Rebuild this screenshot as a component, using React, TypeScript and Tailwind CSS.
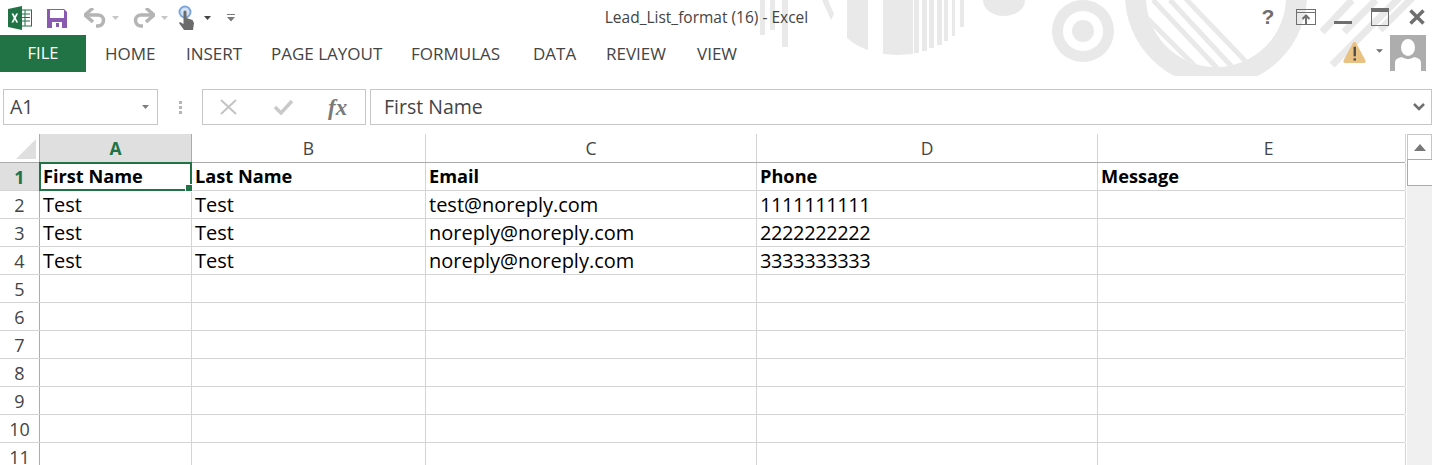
import React from "react";

const font = "font-['Open_Sans','Noto_Sans',sans-serif]";

const columns = [
    { name: "A", width: "w-[152px]", active: true },
    { name: "B", width: "w-[234px]" },
    { name: "C", width: "w-[331px]" },
    { name: "D", width: "w-[341px]" },
    { name: "E", width: "w-[308px]", extra: "pl-[34px]" },
];

const rows = [
    ["First Name", "Last Name", "Email", "Phone", "Message"],
    ["Test", "Test", "test@noreply.com", "1111111111", ""],
    ["Test", "Test", "noreply@noreply.com", "2222222222", ""],
    ["Test", "Test", "noreply@noreply.com", "3333333333", ""],
    ["", "", "", "", ""],
    ["", "", "", "", ""],
    ["", "", "", "", ""],
    ["", "", "", "", ""],
    ["", "", "", "", ""],
    ["", "", "", "", ""],
    ["", "", "", "", ""],
];

const tabs = [
    { label: "HOME", width: "w-[81px]" },
    { label: "INSERT", width: "w-[85px]" },
    { label: "PAGE LAYOUT", width: "w-[140px]" },
    { label: "FORMULAS", width: "w-[122px]" },
    { label: "DATA", width: "w-[73px]" },
    { label: "REVIEW", width: "w-[91px]" },
    { label: "VIEW", width: "w-[60px]" },
];

const Backdrop = () => (
    <svg className="absolute left-0 top-0" width="1432" height="76" viewBox="0 0 1432 76">
        <defs>
            <clipPath id="inner">
                <circle cx="1216" cy="-3" r="70" />
            </clipPath>
        </defs>
        <g fill="#e9e9e9">
            <rect x="760" y="0" width="5" height="35" />
            <rect x="770" y="0" width="5" height="30" />
            <rect x="782" y="0" width="6" height="47" />
            <path d="M822 0h6l6 14-3 6z" />
            <path d="M847 0h21v50q-12-4-21-12z" />
            <path d="M883 0h30v54l-15 1-15-1z" />
            <rect x="914" y="0" width="5" height="53" />
            <rect x="922" y="0" width="5" height="51" />
            <rect x="929" y="0" width="5" height="48" />
            <rect x="937" y="0" width="5" height="45" />
            <rect x="944" y="0" width="4" height="41" />
            <rect x="952" y="0" width="3" height="36" />
            <rect x="960" y="0" width="4" height="27" />
            <path d="M983 0h42c0 9-9 16-21 16s-21-7-21-16z" />
            <path fillRule="evenodd" d="M1083 0a31 31 0 1 1-.01 0zM1083 11a20 20 0 1 0 .01 0z" />
            <circle cx="1083" cy="31" r="11" />
            <path fillRule="evenodd" d="M1125 -5a91 91 0 0 0 182 0a91 91 0 0 0-182 0zM1146 -3a70 70 0 0 0 140 0a70 70 0 0 0-140 0z" />
        </g>
        <g stroke="#e9e9e9" strokeWidth="5" clipPath="url(#inner)">
            <line x1="1128" y1="-1" x2="1197" y2="68" />
            <line x1="1153" y1="0" x2="1217" y2="68" />
            <line x1="1170" y1="0" x2="1233" y2="68" />
            <line x1="1185" y1="-2" x2="1250" y2="66" />
        </g>
        <g stroke="#e9e9e9" strokeWidth="7">
            <line x1="1322" y1="32" x2="1352" y2="0" />
            <line x1="1344" y1="32" x2="1376" y2="0" />
            <line x1="1332" y1="65" x2="1399" y2="-2" />
            <line x1="1380" y1="30" x2="1414" y2="-4" />
        </g>
    </svg>
);

const ExcelLogo = () => (
    <svg width="24" height="24" viewBox="0 0 24 24">
        <rect x="11" y="4" width="12.5" height="16" fill="#fff" stroke="#217346" />
        <path d="M13 8h9M13 11.5h9M13 15h9M17 4v16" stroke="#217346" strokeWidth="1" />
        <path d="M0 3L14 0v24L0 21z" fill="#217346" />
        <path d="M3.5 7.5h2l1.3 2.8 1.4-2.8h1.9l-2.3 4.4 2.4 4.6h-2l-1.4-3-1.5 3H3.4l2.4-4.6z" fill="#fff" />
    </svg>
);

const SaveIcon = () => (
    <svg width="20" height="20" viewBox="0 0 20 20">
        <path d="M0 1h17l3 3v16H0z" fill="#8a5ab0" />
        <rect x="3" y="2" width="14" height="8" fill="#fff" />
        <rect x="5" y="14" width="10" height="6" fill="#fff" />
        <rect x="9" y="15" width="3" height="4" fill="#8a5ab0" />
    </svg>
);

const Caret = ({ color = "#c6c6c6" }: { color?: string }) => (
    <svg width="7" height="4" viewBox="0 0 7 4">
        <path d="M0 0h7L3.5 4z" fill={color} />
    </svg>
);

const UndoIcon = ({ flip }: { flip?: boolean }) => (
    <svg width="22" height="20" viewBox="0 0 22 20" className={flip ? "-scale-x-100" : ""}>
        <path d="M2 7h12a5.500 5.500 0 0 1 0 11h-2" fill="none" stroke="#b4b4b4" strokeWidth="3.500" />
        <path d="M9 0L1 7l8 7" fill="none" stroke="#b4b4b4" strokeWidth="3.500" />
    </svg>
);

const TouchIcon = () => (
    <svg width="18" height="26" viewBox="0 0 18 26">
        <circle cx="7" cy="7" r="5.500" fill="#d3e2f3" stroke="#7ea6d8" strokeWidth="2" />
        <path d="M5.500 7a1.500 1.500 0 0 1 3 0v6l6 2 1.500 3-1 7H6l-5-7 1-1 3.500 2z" fill="#6b6b6b" />
    </svg>
);

const CustomizeIcon = () => (
    <svg width="8" height="8" viewBox="0 0 8 8">
        <rect x="0" y="0" width="8" height="1" fill="#7a7a7a" />
        <path d="M0 3h8L4 7.500z" fill="#7a7a7a" />
    </svg>
);

const WindowButtons = () => (
    <div className="flex items-start h-[35px] pr-[7px] text-[#6f6f6f]">
        <span className="w-[24px] mr-[16px] mt-[2px] text-center text-[21px] leading-[29px] font-bold font-['Liberation_Sans',sans-serif]">?</span>
        <svg width="20" height="16" viewBox="0 0 20 16" className="mt-[9px] mr-[18px]">
            <rect x=".5" y=".5" width="19" height="15" fill="none" stroke="#6f6f6f" />
            <path d="M1 3.500h18" stroke="#6f6f6f" />
            <path d="M10 15V7M6.500 10L10 6.500l3.500 3.500" fill="none" stroke="#6f6f6f" strokeWidth="2" />
        </svg>
        <span className="w-[18px] h-[3px] mt-[21px] mr-[19px] bg-[#6f6f6f]" />
        <svg width="18" height="18" viewBox="0 0 18 18" className="mt-[8px] mr-[20px]">
            <rect x=".5" y=".5" width="17" height="17" fill="none" stroke="#6f6f6f" />
            <rect x="0" y="0" width="18" height="4" fill="#6f6f6f" />
        </svg>
        <svg width="16" height="16" viewBox="0 0 16 16" className="mt-[9px]">
            <path d="M1.500 1.500l13 13M14.500 1.500l-13 13" stroke="#6f6f6f" strokeWidth="3.500" />
        </svg>
    </div>
);

const Account = () => (
    <div className="flex items-start pr-[6px]">
        <svg width="23" height="21" viewBox="0 0 24 22" className="mt-[7px] mr-[10px]">
            <path d="M12 0c1 0 1.500 .5 2 1.500l9.500 18c.5 1.200 0 2.500-1.500 2.500H2c-1.500 0-2-1.300-1.500-2.500L10 1.500C10.500 .5 11 0 12 0z" fill="#e9c283" />
            <rect x="11" y="5" width="2.500" height="10" fill="#4d4d4d" />
            <rect x="11" y="17" width="2.500" height="2.500" fill="#4d4d4d" />
        </svg>
        <svg width="7" height="4" viewBox="0 0 8 4" className="mt-[14px] mr-[7px]">
            <path d="M0 0h8L4 4z" fill="#6f6f6f" />
        </svg>
        <svg width="36" height="36" viewBox="0 0 36 36">
            <rect width="36" height="36" fill="#adadad" />
            <ellipse cx="18" cy="12.500" rx="7" ry="8.500" fill="#fff" />
            <path d="M5 36V28c0-4 3-5 7-6 2 1.500 4 2 6 2s4-.5 6-2c4 1 7 2 7 6v8z" fill="#fff" />
        </svg>
    </div>
);

const FormulaBar = () => (
    <div className="flex h-[36px] mt-[17px] pl-[3px] items-stretch">
        <div className="w-[155px] border border-[#c6c6c6] flex items-center justify-between pl-[6px] pr-[8px] text-[#444]">
            <span className="text-[19.5px]">A1</span>
            <Caret color="#7f7f7f" />
        </div>
        <div className="w-[44px] flex flex-col items-center justify-center gap-[2px]">
            <span className="w-[3px] h-[3px] bg-[#b5b5b5]" />
            <span className="w-[3px] h-[3px] bg-[#b5b5b5]" />
            <span className="w-[3px] h-[3px] bg-[#b5b5b5]" />
        </div>
        <div className="w-[164px] border border-[#c6c6c6] flex items-center pl-[17px]">
            <svg width="17" height="16" viewBox="0 0 17 16">
                <path d="M1 1l15 14M16 1L1 15" stroke="#c4c4c4" strokeWidth="2" />
            </svg>
            <svg width="20" height="16" viewBox="0 0 20 16" className="ml-[37px]">
                <path d="M1 8l6 6L18 2" fill="none" stroke="#c9c9c9" strokeWidth="3.500" />
            </svg>
            <span className="ml-[34px] font-['Liberation_Serif',serif] italic font-bold text-[23px] leading-none text-[#7a7a7a]">fx</span>
        </div>
        <div className="w-[4px]" />
        <div className="flex-1 border border-[#c6c6c6] flex items-center justify-between pl-[13px] pr-[6px] text-[#444]">
            <span className="text-[19.5px]">First Name</span>
            <svg width="12" height="8" viewBox="0 0 12 8">
                <path d="M1 1l5 5 5-5" fill="none" stroke="#6f6f6f" strokeWidth="2.500" />
            </svg>
        </div>
    </div>
);

const Sheet = () => (
    <div className="flex mt-[9px] relative">
        <div className="w-[1405px] shrink-0">
            <div className="flex h-[29px] border-b border-[#ababab]">
                <div className="w-[40px] shrink-0 bg-white border-r border-[#ababab] relative">
                    <div className="absolute right-[3px] bottom-[3px] w-0 h-0 border-l-[20px] border-l-transparent border-b-[20px] border-b-[#dfdfdf]" />
                </div>
                {columns.map((c) => (
                    <div
                        key={c.name}
                        className={`${c.width} ${c.extra ?? ""} shrink-0 border-r flex items-center justify-center text-[17.5px] pt-[1px] ${c.active ? "bg-[#dfdfdf] text-[#217346] font-bold border-[#ababab]" : "text-[#444] border-[#d4d4d4]"}`}
                    >
                        {c.name}
                    </div>
                ))}
            </div>
            {rows.map((row, i) => (
                <div key={i} className="flex h-[28px] border-b border-[#d4d4d4]">
                    <div className={`w-[40px] shrink-0 border-r border-[#ababab] flex items-center justify-center text-[18px] pt-[1px] ${i === 0 ? "bg-[#dfdfdf] text-[#217346] font-bold" : "text-[#444]"}`}>
                        {i + 1}
                    </div>
                    {row.map((value, j) => (
                        <div
                            key={j}
                            className={`${columns[j].width} shrink-0 border-r border-[#d4d4d4] flex items-center pl-[3px] pt-[1px] text-black whitespace-nowrap ${i === 0 ? "font-bold text-[18.2px]" : "text-[20px]"} ${i > 0 && j === 3 ? "tracking-[-0.4px]" : ""} ${i === 0 && j === 0 ? "relative" : ""}`}
                        >
                            {value}
                            {i === 0 && j === 0 && (
                                <>
                                    <div className="absolute -left-[1px] -top-[1px] -right-[1px] -bottom-[1px] border-2 border-[#217346]" />
                                    <div className="absolute -right-[2px] -bottom-[2px] w-[6px] h-[6px] bg-[#217346] border border-white box-content" />
                                </>
                            )}
                        </div>
                    ))}
                </div>
            ))}
        </div>
        <div className="flex-1 ml-[2px] flex flex-col">
            <div className="h-[25px] border border-[#c6c6c6] border-b-0 flex items-center justify-center">
                <svg width="12" height="7" viewBox="0 0 12 7">
                    <path d="M6 0l6 7H0z" fill="#777" />
                </svg>
            </div>
            <div className="h-[27px] border-y border-l border-[#ababab] bg-white" />
            <div className="flex-1 bg-[#f0f0f0]" />
        </div>
    </div>
);

const App: React.FC = () => {
    return (
        <div className={`w-[1432px] h-[465px] overflow-hidden bg-white relative ${font}`}>
            <Backdrop />
            <div className="relative">
                <div className="flex h-[35px] items-center">
                    <div className="ml-[8px] mr-[15px]"><ExcelLogo /></div>
                    <SaveIcon />
                    <div className="ml-[17px] mr-[6px]"><UndoIcon /></div>
                    <Caret />
                    <div className="ml-[14px] mr-[6px]"><UndoIcon flip /></div>
                    <Caret />
                    <div className="ml-[10px] mr-[8px]"><TouchIcon /></div>
                    <Caret color="#444" />
                    <div className="ml-[16px]"><CustomizeIcon /></div>
                    <div className="absolute left-0 right-0 top-0 h-[35px] flex items-center justify-center pr-[19px] pointer-events-none">
                        <span className="text-[15.5px] text-[#444]">Lead_List_format (16) - Excel</span>
                    </div>
                    <div className="ml-auto"><WindowButtons /></div>
                </div>
                <div className="flex h-[37px] items-stretch">
                    <div className="w-[86px] bg-[#217346] text-white text-[16.5px] flex items-center justify-center">FILE</div>
                    <div className="w-[5px]" />
                    {tabs.map((t) => (
                        <div key={t.label} className={`${t.width} flex items-center pl-[14px] text-[17px] text-[#444] whitespace-nowrap`}>
                            {t.label}
                        </div>
                    ))}
                    <div className="ml-auto"><Account /></div>
                </div>
                <FormulaBar />
                <Sheet />
            </div>
        </div>
    );
};

export default App;
